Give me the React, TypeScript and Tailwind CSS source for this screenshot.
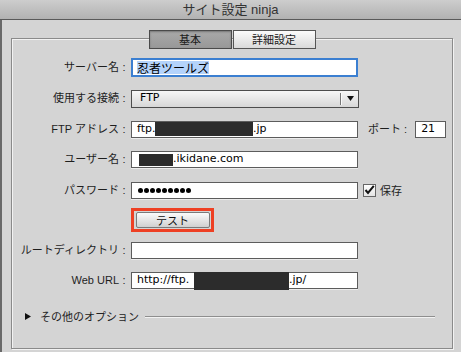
import React from "react";

const label = "font-['Liberation_Sans','Noto_Sans_CJK_JP',sans-serif] text-[11px] text-[#1e1e1e]";
const mono = "font-['DejaVu_Sans','Noto_Sans_CJK_JP',sans-serif] text-[11px] text-black";

function Label({ text }: { text: string }) {
  return (
    <div className={`flex items-center ${label}`}>
      <span className="w-[106px] text-right whitespace-nowrap">{text}</span>
      <span className="w-[10px] text-center">:</span>
      <span className="w-[2px]" />
    </div>
  );
}

function Field({ children, w = "w-[227px]" }: { children?: React.ReactNode; w?: string }) {
  return (
    <div
      className={`${w} h-[17px] bg-white border border-[#5c5c5c] shadow-[0_1px_0_#ececec] flex items-center pl-[5px] overflow-visible whitespace-nowrap ${mono}`}
    >
      {children}
    </div>
  );
}

function Redact({ w, h }: { w: string; h: string }) {
  return <span className={`inline-block ${w} ${h} bg-[#2c2c2c] shrink-0`} />;
}

export default function App() {
  return (
    <div className="w-[461px] h-[352px] bg-[#d4d4d4] overflow-hidden flex flex-col">
      {/* title bar */}
      <div className="h-[20px] shrink-0 border-b border-[#5a5a5a] bg-gradient-to-b from-[#cdcdcd] to-[#b2b2b2] flex items-center justify-center">
        <span className="font-['Liberation_Sans','Noto_Sans_CJK_JP',sans-serif] text-[13px] text-[#333] leading-none">
          サイト設定 ninja
        </span>
      </div>

      <div className="flex-1 border-l-2 border-[#686868] pl-[9px] pt-[18px]">
        <div className="w-[442px] h-[311px] border border-[#8a8a8a] shadow-[inset_1px_1px_0_#f2f2f2,1px_1px_0_#f2f2f2] flex flex-col pl-[1px]">
          {/* tabs */}
          <div className="flex justify-center gap-[1px] -mt-[9px] pr-[1px]">
            <div className="w-[83px] h-[19px] border border-[#4a4a4a] bg-gradient-to-b from-[#a9a9a9] to-[#989898] shadow-[inset_0_1px_2px_#777] flex items-center justify-center font-['Noto_Sans_CJK_JP',sans-serif] text-[11px] text-[#1a1a1a]">
              基本
            </div>
            <div className="w-[83px] h-[19px] border border-[#555] bg-gradient-to-b from-[#fbfbfb] to-[#dadada] flex items-center justify-center font-['Noto_Sans_CJK_JP',sans-serif] text-[11px] text-[#1a1a1a]">
              詳細設定
            </div>
          </div>

          <div className="mt-[3px] flex flex-col">
            {/* server name */}
            <div className="h-[31px] flex items-center">
              <Label text="サーバー名" />
              <div className="w-[227px] h-[19px] bg-white border-2 border-[#3b7fd1] flex items-center pl-[4px] py-[1px]">
                <span className="bg-[#b4d3fb] h-full flex items-center font-['Noto_Sans_CJK_JP',sans-serif] text-[12px] text-black">
                  忍者ツールズ
                </span>
              </div>
            </div>

            {/* connection */}
            <div className="h-[31px] flex items-center">
              <Label text="使用する接続" />
              <div className="w-[228px] h-[18px] border border-[#4d4d4d] bg-gradient-to-b from-[#f7f7f7] to-[#d7d7d7] flex items-center">
                <span className={`flex-1 pl-[8px] ${mono}`}>FTP</span>
                <span className="w-[1px] h-[12px] bg-[#777]" />
                <span className="w-[1px] h-[12px] bg-[#fafafa]" />
                <span className="w-[16px] flex justify-center">
                  <svg width="7" height="5" viewBox="0 0 7 5">
                    <path d="M0 0 H7 L3.5 5 Z" fill="#111" />
                  </svg>
                </span>
              </div>
            </div>

            {/* ftp address */}
            <div className="h-[30px] flex items-center">
              <Label text="FTP アドレス" />
              <Field>
                <span className="w-[18px]">ftp.</span>
                <Redact w="w-[98px]" h="h-[14px]" />
                <span>.jp</span>
              </Field>
              <span className={`ml-[10px] ${label}`}>ポート :</span>
              <div className={`ml-[8px] w-[31px] h-[17px] bg-white border border-[#5c5c5c] flex items-center pl-[5px] ${mono}`}>
                21
              </div>
            </div>

            {/* user */}
            <div className="h-[31px] flex items-center">
              <Label text="ユーザー名" />
              <Field>
                <span className="w-[2px]" />
                <Redact w="w-[34px]" h="h-[12px]" />
                <span>.ikidane.com</span>
              </Field>
            </div>

            {/* password */}
            <div className="h-[30px] flex items-center">
              <Label text="パスワード" />
              <Field>
                <div className="flex gap-[1px] pl-[1px]">
                  {Array.from({ length: 9 }).map((_, i) => (
                    <span key={i} className="w-[5px] h-[5px] rounded-full bg-black" />
                  ))}
                </div>
              </Field>
              <div className="ml-[5px] w-[13px] h-[13px] border border-[#666] bg-gradient-to-b from-white to-[#e4e4e4] flex items-center justify-center">
                <svg width="11" height="10" viewBox="0 0 11 10">
                  <path d="M1.5 5 L4 8 L9.8 0.8" stroke="#111" strokeWidth="2" fill="none" />
                </svg>
              </div>
              <span className="ml-[4px] font-['Noto_Sans_CJK_JP',sans-serif] text-[11px] text-[#222]">保存</span>
            </div>

            {/* test */}
            <div className="h-[30px] flex items-center">
              <div className="w-[118px]" />
              <div className="w-[83px] h-[24px] border-[3px] border-[#ee4024] flex items-center justify-center">
                <div className="w-[74px] h-[16px] border border-[#7a7a7a] rounded-[2px] bg-gradient-to-b from-[#fbfbfb] to-[#d0d0d0] flex items-center justify-center font-['Noto_Sans_CJK_JP',sans-serif] text-[11px] text-[#111]">
                  テスト
                </div>
              </div>
            </div>

            {/* root dir */}
            <div className="h-[30px] flex items-center">
              <Label text="ルートディレクトリ" />
              <Field />
            </div>

            {/* web url */}
            <div className="h-[31px] flex items-center">
              <Label text="Web URL" />
              <Field>
                <span className="w-[57px]">http://ftp.</span>
                <Redact w="w-[95px]" h="h-[18px]" />
                <span>.jp/</span>
              </Field>
            </div>

            {/* other options */}
            <div className="h-[40px] flex items-center">
              <svg className="ml-[12px]" width="6" height="7" viewBox="0 0 6 7">
                <path d="M0 0 L6 3.5 L0 7 Z" fill="#111" />
              </svg>
              <span className="ml-[9px] font-['Noto_Sans_CJK_JP',sans-serif] text-[11px] text-[#222]">
                その他のオプション
              </span>
              <div className="ml-[6px] w-[290px] h-[1px] bg-[#8e8e8e] shadow-[0_1px_0_#f2f2f2]" />
            </div>
          </div>
        </div>
      </div>
    </div>
  );
}
